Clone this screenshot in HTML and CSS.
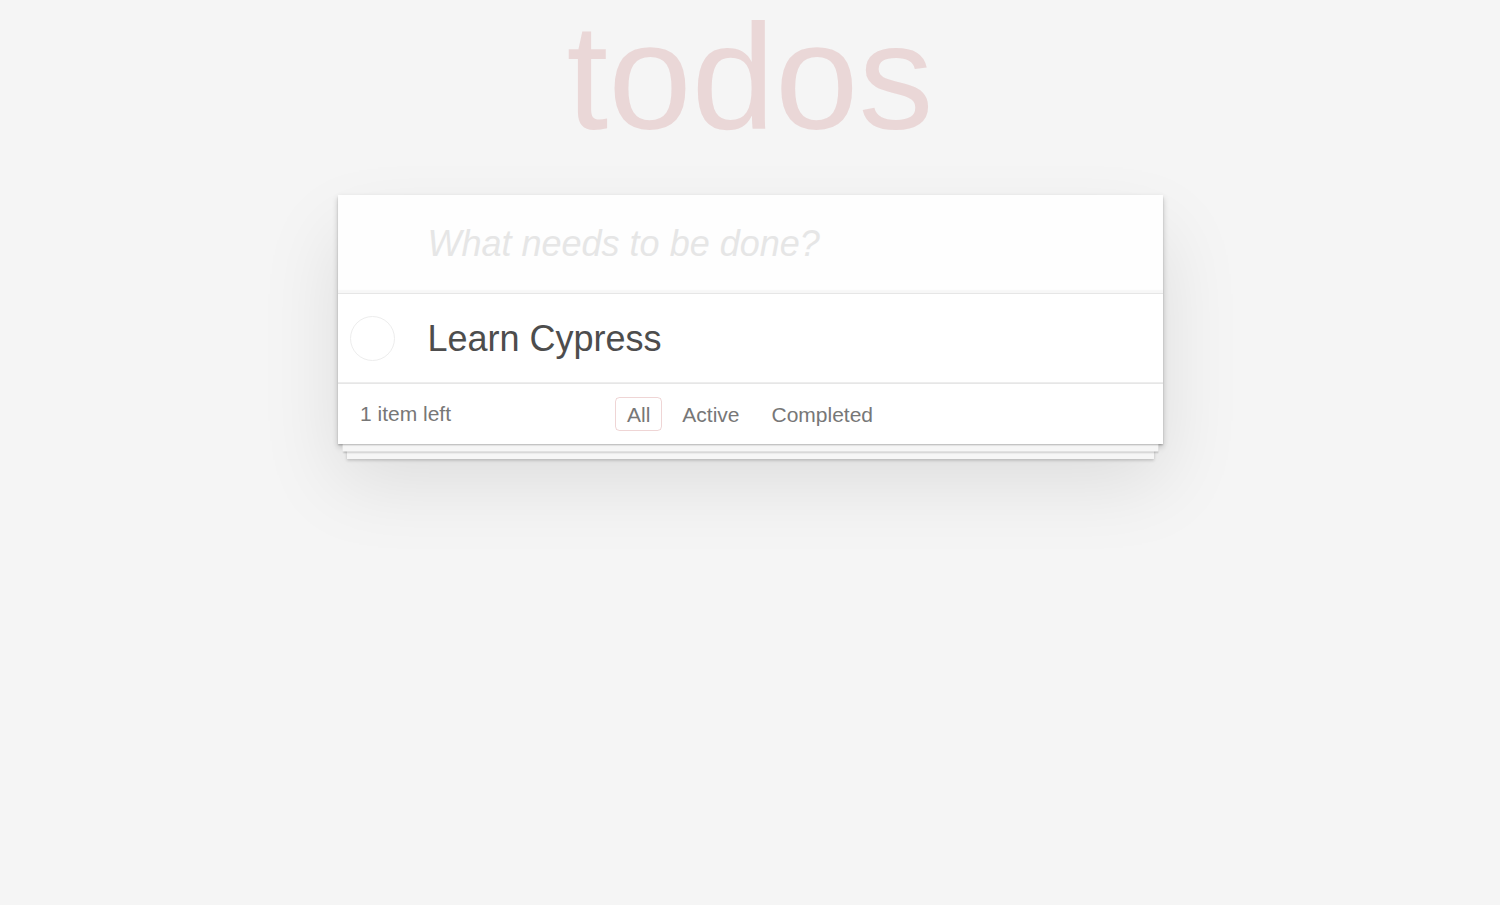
FILE: index.html
```html
<!DOCTYPE html>
<html lang="en">
<head>
<meta charset="utf-8">
<title>todos</title>
<link rel="stylesheet" href="styles.css">
</head>
<body>
<div class="page">
  <h1 class="title">todos</h1>
  <section class="todoapp">
    <header class="header">
      <input class="new-todo" placeholder="What needs to be done?">
    </header>
    <section class="main">
      <ul class="todo-list">
        <li class="todo">
          <span class="toggle"></span>
          <label class="todo-label">Learn Cypress</label>
        </li>
      </ul>
    </section>
    <footer class="footer">
      <span class="todo-count"><strong class="count-num">1</strong> item left</span>
      <ul class="filters"><li class="filter"><a class="filter-link selected" href="#/">All</a></li><li class="filter"><a class="filter-link" href="#/active">Active</a></li><li class="filter"><a class="filter-link" href="#/completed">Completed</a></li></ul>
      <span class="spacer"></span>
    </footer>
  </section>
</div>
</body>
</html>
```

FILE: styles.css
```css
html, body {
  margin: 0;
  padding: 0;
}

html {
  background: #f5f5f5;
}

body {
  min-height: 905px;
  background: #f5f5f5;
  color: #4d4d4d;
  font-family: "Liberation Sans", Arial, Helvetica, sans-serif;
  font-size: 21px;
  line-height: 29.4px;
  font-weight: 300;
}

.page {
  width: 825px;
  margin: 0 auto;
  padding-top: 2px;
  padding-bottom: 60px;
}

.title {
  margin: 0 0 43px 0;
  height: 150px;
  font-size: 150px;
  line-height: 150px;
  font-weight: 100;
  text-align: center;
  color: rgba(175, 47, 47, 0.15);
}

.todoapp {
  background: #fff;
  margin-bottom: 60px;
  box-shadow:
    0 1.5px 1.5px rgba(0, 0, 0, 0.2),
    0 12px 0 -4.5px #f6f6f6,
    0 13.5px 1.5px -4.5px rgba(0, 0, 0, 0.2),
    0 24px 0 -9px #f6f6f6,
    0 25.5px 3px -9px rgba(0, 0, 0, 0.2),
    0 3px 6px 0 rgba(0, 0, 0, 0.2),
    0 37.5px 75px 0 rgba(0, 0, 0, 0.1);
}

.header {
  display: block;
}

.new-todo {
  display: block;
  width: 100%;
  box-sizing: border-box;
  margin: 0;
  padding: 24px 24px 24px 90px;
  border: none;
  outline: none;
  font-family: inherit;
  font-size: 36px;
  line-height: 50.4px;
  height: 98.4px;
  color: inherit;
  background: rgba(0, 0, 0, 0.003);
  box-shadow: inset 0 -3px 1.5px rgba(0, 0, 0, 0.03);
}

.new-todo::placeholder {
  font-style: italic;
  font-weight: 300;
  color: #e6e6e6;
}

.main {
  border-top: 1px solid #e6e6e6;
}

.todo-list {
  margin: 0;
  padding: 0;
  list-style: none;
}

.todo {
  display: flex;
  align-items: center;
  font-size: 36px;
  border-bottom: 1px solid #ededed;
}

.toggle {
  flex: none;
  width: 45px;
  height: 45px;
  box-sizing: border-box;
  margin-left: 12px;
  border: 1.3px solid #ededed;
  border-radius: 50%;
}

.todo-label {
  display: block;
  flex: 1;
  padding: 23px 22.5px 21.5px 33px;
  line-height: 43.2px;
  color: #4d4d4d;
}

.footer {
  display: grid;
  grid-template-columns: 1fr auto 1fr;
  align-items: center;
  height: 30px;
  padding: 15px 22.5px;
  color: #777;
  border-top: 1px solid #e6e6e6;
}

.todo-count {
  text-align: left;
  white-space: nowrap;
}

.count-num {
  font-weight: 300;
}

.filters {
  margin: 0;
  padding: 0;
  list-style: none;
  text-align: center;
  white-space: nowrap;
}

.filter {
  display: inline;
}

.filter-link {
  color: inherit;
  margin: 4.5px;
  padding: 4.5px 10.5px;
  text-decoration: none;
  border: 1.5px solid transparent;
  border-radius: 4.5px;
}

.filter-link.selected {
  border-color: rgba(175, 47, 47, 0.2);
}
```
